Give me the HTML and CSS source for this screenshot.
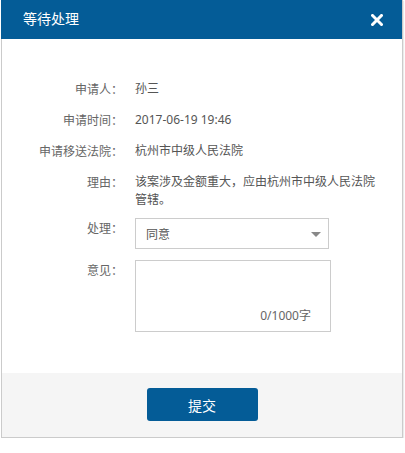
FILE: index.html
```html
<!DOCTYPE html>
<html lang="zh-CN">
<head>
<meta charset="utf-8">
<link rel="stylesheet" href="styles.css">
</head>
<body>
<div class="dialog">
  <div class="header">
    <span class="title">等待处理</span>
    <svg class="close" width="12" height="12" viewBox="0 0 12 12"><path d="M1.5 1.5 L10.5 10.5 M10.5 1.5 L1.5 10.5" stroke="#fff" stroke-width="3" stroke-linecap="square"/></svg>
  </div>
  <div class="content">
    <div class="row r1"><div class="label">申请人：</div><div class="value">孙三</div></div>
    <div class="row r2"><div class="label">申请时间：</div><div class="value">2017-06-19 19:46</div></div>
    <div class="row r3"><div class="label">申请移送法院：</div><div class="value">杭州市中级人民法院</div></div>
    <div class="row r4"><div class="label">理由：</div><div class="value">该案涉及金额重大，应由杭州市中级人民法院管辖。</div></div>
    <div class="row r5"><div class="label tall">处理：</div>
      <div class="select"><span>同意</span><span class="arrow"></span></div></div>
    <div class="row r6"><div class="label tall">意见：</div>
      <div class="textarea"><span class="count">0/1000字</span></div></div>
  </div>
  <div class="footer">
    <button class="submit">提交</button>
  </div>
</div>
</body>
</html>
```
FILE: styles.css
```css
html, body { margin: 0; padding: 0; background: #fff; }
body {
  font-family: "Noto Sans", "Noto Sans CJK SC", sans-serif;
  font-size: 12px; color: #555;
  text-spacing-trim: space-all;
}
.dialog {
  margin-left: 1px;
  width: 402px;
  box-sizing: border-box;
  border: 1px solid #cbcbcb;
  border-top: none;
  box-shadow: 1px 1px 1px rgba(0,0,0,0.08);
}
.header {
  height: 39px;
  margin: 0 0 0 -1px;
  background: #045c97;
  display: flex;
  align-items: center;
  justify-content: space-between;
  padding: 0 19px 0 22px;
}
.title { color: #fff; font-size: 14px; line-height: 20px; margin-top: -1px; }
.close { display: block; }
.content { padding: 41px 0 41px 0; }
.row { display: flex; }
.label {
  width: 121px; flex: none; text-align: right; color: #666; line-height: 18px;
  font-family: "Noto Sans CJK TC", sans-serif;
}
.label.tall { line-height: 20px; }
.value { margin-left: 12px; width: 245px; line-height: 18px; color: #555; }
.r2, .r3, .r4 { margin-top: 13px; }
.r5 { margin-top: 9px; }
.r6 { margin-top: 11px; }
.select {
  margin-left: 12px;
  width: 194px; height: 31px; box-sizing: border-box;
  border: 1px solid #ccc;
  display: flex; align-items: center; justify-content: space-between;
  padding: 0 7px 0 10px;
  color: #555;
}
.arrow {
  width: 0; height: 0;
  border-left: 5px solid transparent; border-right: 5px solid transparent;
  border-top: 5px solid #888;
  margin-top: 1px;
}
.textarea {
  margin-left: 12px;
  width: 196px; height: 72px; box-sizing: border-box;
  border: 1px solid #ccc;
  display: flex; align-items: flex-end; justify-content: flex-end;
  padding: 0 19px 7px 0;
}
.count { color: #666; line-height: 16px; }
.footer {
  background: #f5f5f5;
  height: 64px;
  display: flex; justify-content: center; align-items: flex-start;
}
.submit {
  margin-top: 15px;
  width: 111px; height: 33px;
  background: #045c97; color: #fff;
  border: none; border-radius: 3px;
  font-family: inherit; font-size: 14px;
  cursor: pointer;
}
```
